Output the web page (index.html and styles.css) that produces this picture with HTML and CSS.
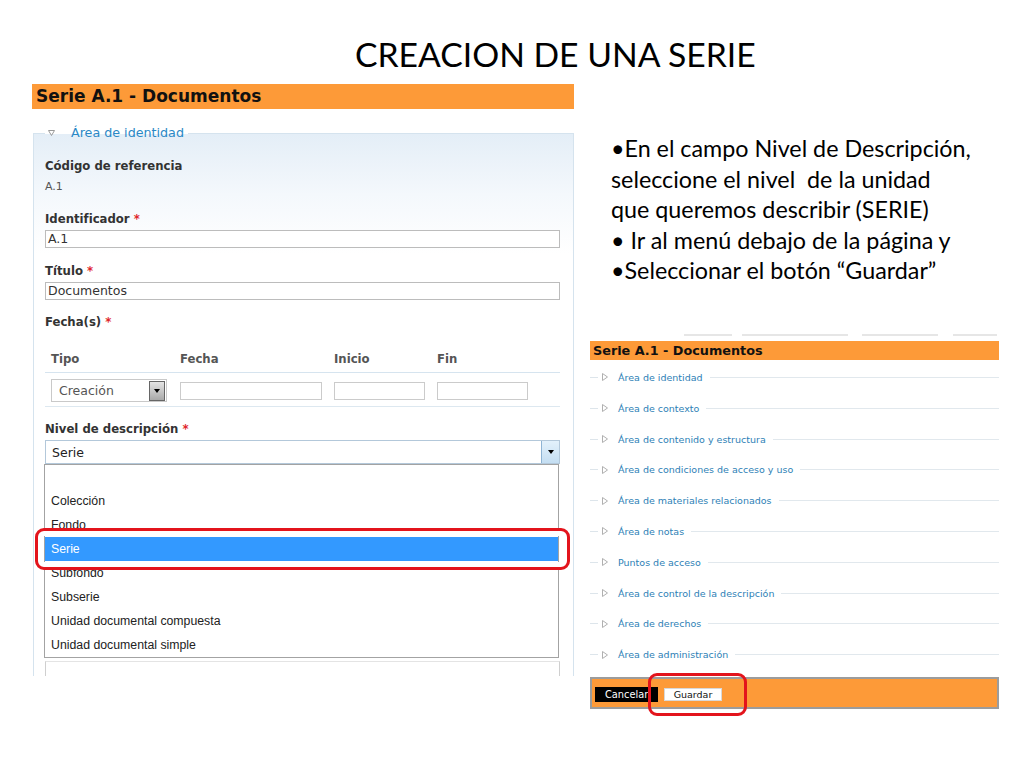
FILE: index.html
```html
<!DOCTYPE html>
<html lang="es">
<head>
<meta charset="utf-8">
<title>Creación de una serie</title>
<link rel="stylesheet" href="styles.css">
</head>
<body>
<div class="slide">
  <h1 class="title">CREACION DE UNA SERIE</h1>
  <div class="cols">
    <section class="left">
      <div class="hdr">Serie A.1 - Documentos</div>
      <fieldset class="fs">
        <legend class="lg"><svg class="tri-d" width="7" height="6" viewBox="0 0 7 6"><path d="M0.5 0.5 H6.5 L3.5 5.5 Z"/></svg><span>Área de identidad</span></legend>
        <div class="lbl m17">Código de referencia</div>
        <div class="val">A.1</div>
        <div class="lbl m16">Identificador <span class="req">*</span></div>
        <div class="inp">A.1</div>
        <div class="lbl m15">Título <span class="req">*</span></div>
        <div class="inp">Documentos</div>
        <div class="lbl m14">Fecha(s) <span class="req">*</span></div>
        <div class="thead">
          <span>Tipo</span><span>Fecha</span><span>Inicio</span><span>Fin</span>
        </div>
        <div class="trow">
          <div class="sel1"><span class="sel1-t">Creación</span><span class="btn-g"><svg width="6" height="4" viewBox="0 0 6 4"><path d="M0 0 H6 L3 4 Z"/></svg></span></div>
          <div class="box w142"></div>
          <div class="box w91"></div>
          <div class="box w91"></div>
        </div>
        <div class="lbl m14">Nivel de descripción <span class="req">*</span></div>
        <div class="sel2"><span class="sel2-t">Serie</span><span class="btn-b"><svg width="6" height="4" viewBox="0 0 6 4"><path d="M0 0 H6 L3 4 Z"/></svg></span></div>
        <ul class="dd">
          <li></li>
          <li>Colección</li>
          <li>Fondo</li>
          <li class="on">Serie</li>
          <li>Subfondo</li>
          <li>Subserie</li>
          <li>Unidad documental compuesta</li>
          <li>Unidad documental simple</li>
        </ul>
        <div class="nextbox"></div>
      </fieldset>
    </section>
    <section class="right">
      <div class="bullets">
        <p>•En el campo Nivel de Descripción,<br>seleccione el nivel&nbsp; de la unidad<br>que queremos describir (SERIE)</p>
        <p>• Ir al menú debajo de la página y</p>
        <p>•Seleccionar el botón “Guardar”</p>
      </div>
      <div class="shot2">
        <div class="faint"><i class="s1"></i><i class="s2"></i><i class="s3"></i><i class="s4"></i></div>
        <div class="hdr2">Serie A.1 - Documentos</div>
        <ul class="areas">
          <li><i class="l1"></i><svg class="tri-r" width="6" height="8" viewBox="0 0 6 8"><path d="M0.5 0.5 L5.5 4 L0.5 7.5 Z"/></svg><span>Área de identidad</span><i class="l2"></i></li>
          <li><i class="l1"></i><svg class="tri-r" width="6" height="8" viewBox="0 0 6 8"><path d="M0.5 0.5 L5.5 4 L0.5 7.5 Z"/></svg><span>Área de contexto</span><i class="l2"></i></li>
          <li><i class="l1"></i><svg class="tri-r" width="6" height="8" viewBox="0 0 6 8"><path d="M0.5 0.5 L5.5 4 L0.5 7.5 Z"/></svg><span>Área de contenido y estructura</span><i class="l2"></i></li>
          <li><i class="l1"></i><svg class="tri-r" width="6" height="8" viewBox="0 0 6 8"><path d="M0.5 0.5 L5.5 4 L0.5 7.5 Z"/></svg><span>Área de condiciones de acceso y uso</span><i class="l2"></i></li>
          <li><i class="l1"></i><svg class="tri-r" width="6" height="8" viewBox="0 0 6 8"><path d="M0.5 0.5 L5.5 4 L0.5 7.5 Z"/></svg><span>Área de materiales relacionados</span><i class="l2"></i></li>
          <li><i class="l1"></i><svg class="tri-r" width="6" height="8" viewBox="0 0 6 8"><path d="M0.5 0.5 L5.5 4 L0.5 7.5 Z"/></svg><span>Área de notas</span><i class="l2"></i></li>
          <li><i class="l1"></i><svg class="tri-r" width="6" height="8" viewBox="0 0 6 8"><path d="M0.5 0.5 L5.5 4 L0.5 7.5 Z"/></svg><span>Puntos de acceso</span><i class="l2"></i></li>
          <li><i class="l1"></i><svg class="tri-r" width="6" height="8" viewBox="0 0 6 8"><path d="M0.5 0.5 L5.5 4 L0.5 7.5 Z"/></svg><span>Área de control de la descripción</span><i class="l2"></i></li>
          <li><i class="l1"></i><svg class="tri-r" width="6" height="8" viewBox="0 0 6 8"><path d="M0.5 0.5 L5.5 4 L0.5 7.5 Z"/></svg><span>Área de derechos</span><i class="l2"></i></li>
          <li><i class="l1"></i><svg class="tri-r" width="6" height="8" viewBox="0 0 6 8"><path d="M0.5 0.5 L5.5 4 L0.5 7.5 Z"/></svg><span>Área de administración</span><i class="l2"></i></li>
        </ul>
        <div class="actions">
          <span class="b-cancel">Cancelar</span>
          <span class="b-save">Guardar</span>
        </div>
      </div>
    </section>
  </div>
  <div class="mark mark-left"></div>
  <div class="mark mark-right"></div>
</div>
</body>
</html>
```

FILE: styles.css
```css
* { box-sizing: border-box; }
html, body { margin: 0; padding: 0; background: #fff; }
body { font-family: "DejaVu Sans", Verdana, sans-serif; color: #222; }

.slide { position: relative; width: 1024px; height: 768px; overflow: hidden; background: #fff; }

.title {
  margin: 0;
  height: 84px;
  padding: 34px 0 0 355px;
  font-family: Lato, "Open Sans", sans-serif;
  font-weight: 400;
  font-size: 33.7px;
  line-height: 41px;
  color: #000;
}

.cols { display: flex; align-items: flex-start; }

/* ---------- left screenshot ---------- */
.left {
  width: 542px;
  height: 592px;
  margin-left: 32px;
  overflow: hidden;
}
.hdr {
  height: 25px;
  background: #fd9a38;
  padding-left: 4px;
  font-weight: 700;
  font-size: 17px;
  line-height: 25px;
  color: #111;
}
.fs {
  margin: 16px 0 0 1px;
  padding: 0 13px 0 11px;
  width: 541px;
  min-width: 0;
  min-height: 640px;
  border: 1px solid #d5e3ee;
  background: linear-gradient(#e4eef7 0, #f4f8fc 60px, #fff 120px);
}
.lg {
  padding: 0 4px 0 3px;
  height: 16px;
  line-height: 16px;
  font-size: 12.7px;
  color: #2a88c6;
  display: flex;
  align-items: center;
}
.tri-d { fill: none; stroke: #9a9a9a; stroke-width: 1; margin-right: 16px; }
.lbl {
  font-weight: 700;
  font-size: 11.7px;
  line-height: 16px;
  color: #333;
}
.req { color: #e0262b; }
.m17 { margin-top: 17px; }
.m16 { margin-top: 16px; }
.m15 { margin-top: 15px; }
.m14 { margin-top: 14px; }
.val { margin-top: 5px; font-size: 11px; line-height: 16px; color: #555; }
.inp {
  margin-top: 3px;
  height: 18px;
  border: 1px solid #bcbcbc;
  background: #fff;
  padding-left: 2px;
  font-size: 12.5px;
  line-height: 16px;
  color: #333;
}
.thead {
  margin-top: 15px;
  height: 28px;
  padding-left: 6px;
  display: grid;
  grid-template-columns: 129px 154px 103px 1fr;
  border-bottom: 1px solid #d6e4ef;
  font-weight: 700;
  font-size: 11.7px;
  line-height: 28px;
  color: #555;
}
.trow {
  display: grid;
  grid-template-columns: 129px 154px 103px 1fr;
  align-items: center;
  padding: 6px 0 4px 6px;
  border-bottom: 1px solid #dde8f0;
}
.sel1 {
  width: 116px;
  height: 23px;
  border: 1px solid #c9c9c9;
  background: #fff;
  display: flex;
  align-items: center;
  padding: 0 1px 0 7px;
}
.sel1-t { flex: 1; font-size: 12.5px; color: #555; }
.btn-g {
  width: 16px;
  height: 20px;
  border: 1px solid #666;
  background: linear-gradient(#e4e4e4, #a9a9a9);
  display: flex;
  align-items: center;
  justify-content: center;
}
.btn-g svg, .btn-b svg { fill: #000; }
.box { height: 18px; border: 1px solid #cbcbcb; background: #fff; }
.w142 { width: 142px; }
.w91 { width: 91px; }

.sel2 {
  margin-top: 3px;
  height: 24px;
  border: 1px solid #b3c8da;
  background: #fff;
  display: flex;
  align-items: center;
  padding: 0 0 0 6px;
}
.sel2-t { flex: 1; font-size: 12.5px; color: #222; }
.btn-b {
  width: 18px;
  height: 22px;
  border-left: 1px solid #8eb4d4;
  background: linear-gradient(#e3f1fb, #c4def2);
  display: flex;
  align-items: center;
  justify-content: center;
}
.dd {
  list-style: none;
  margin: 0 0 0 -1px;
  padding: 0;
  width: 515px;
  height: 194px;
  border: 1px solid #a3a3a3;
  background: #fff;
}
.dd li {
  height: 24px;
  padding-left: 6px;
  font-family: "Liberation Sans", Arial, sans-serif;
  font-size: 12.3px;
  line-height: 24px;
  color: #222;
}
.dd li.on { background: #3399ff; color: #fff; }
.nextbox { margin-top: 3px; height: 40px; border: 1px solid #cfcfcf; border-top-color: #e4e4e4; }

/* ---------- right column ---------- */
.right { width: 409px; margin-left: 16px; }
.bullets {
  padding: 49px 0 0 21px;
  font-family: Lato, "Open Sans", sans-serif;
  font-size: 23.3px;
  line-height: 30.5px;
  color: #000;
}
.bullets p { margin: 0; white-space: nowrap; }

.shot2 { margin-top: 45px; }
.faint { height: 10px; display: flex; padding-top: 3px; }
.faint i { display: block; height: 2px; background: #e6e6e6; }
.s1 { margin-left: 94px; width: 48px; }
.s2 { margin-left: 10px; width: 106px; }
.s3 { margin-left: 14px; width: 76px; }
.s4 { margin-left: 15px; width: 44px; }
.hdr2 {
  height: 19px;
  background: #fd9a38;
  padding-left: 3px;
  font-weight: 700;
  font-size: 12.8px;
  line-height: 19px;
  color: #111;
}
.areas { list-style: none; margin: 2.6px 0 0; padding: 0; }
.areas li {
  height: 30.8px;
  display: flex;
  align-items: center;
  font-size: 9.5px;
  color: #2e7fb6;
}
.areas .l1 { display: block; width: 8px; height: 1px; background: #dde5eb; margin-right: 4px; }
.tri-r { fill: none; stroke: #b0b0b0; stroke-width: 1; margin-right: 10px; }
.areas .l2 { display: block; flex: 1; height: 1px; background: #e1e8ed; margin-left: 7px; }

.actions {
  margin-top: 7.4px;
  height: 32px;
  border: 2px solid #9c9c9c;
  background: #fd9a38;
  display: flex;
  align-items: center;
  padding: 2px 0 0 3px;
}
.b-cancel {
  width: 63px;
  height: 15px;
  background: #000;
  color: #fff;
  font-size: 9.8px;
  line-height: 15px;
  padding-left: 10px;
  white-space: nowrap;
  overflow: hidden;
}
.b-save {
  margin-left: 6px;
  width: 58px;
  height: 13px;
  background: #fff;
  border: 1px solid #d8d8d8;
  color: #111;
  font-size: 9.5px;
  line-height: 11px;
  text-align: center;
}

/* ---------- annotation marks (overlay) ---------- */
.mark { position: absolute; border: 3px solid #e3141c; border-radius: 9px; }
.mark-left { left: 35px; top: 528px; width: 535px; height: 42px; box-shadow: inset 0 0 0 5px #fff; }
.mark-right { left: 648px; top: 673px; width: 99px; height: 43px; }
```
